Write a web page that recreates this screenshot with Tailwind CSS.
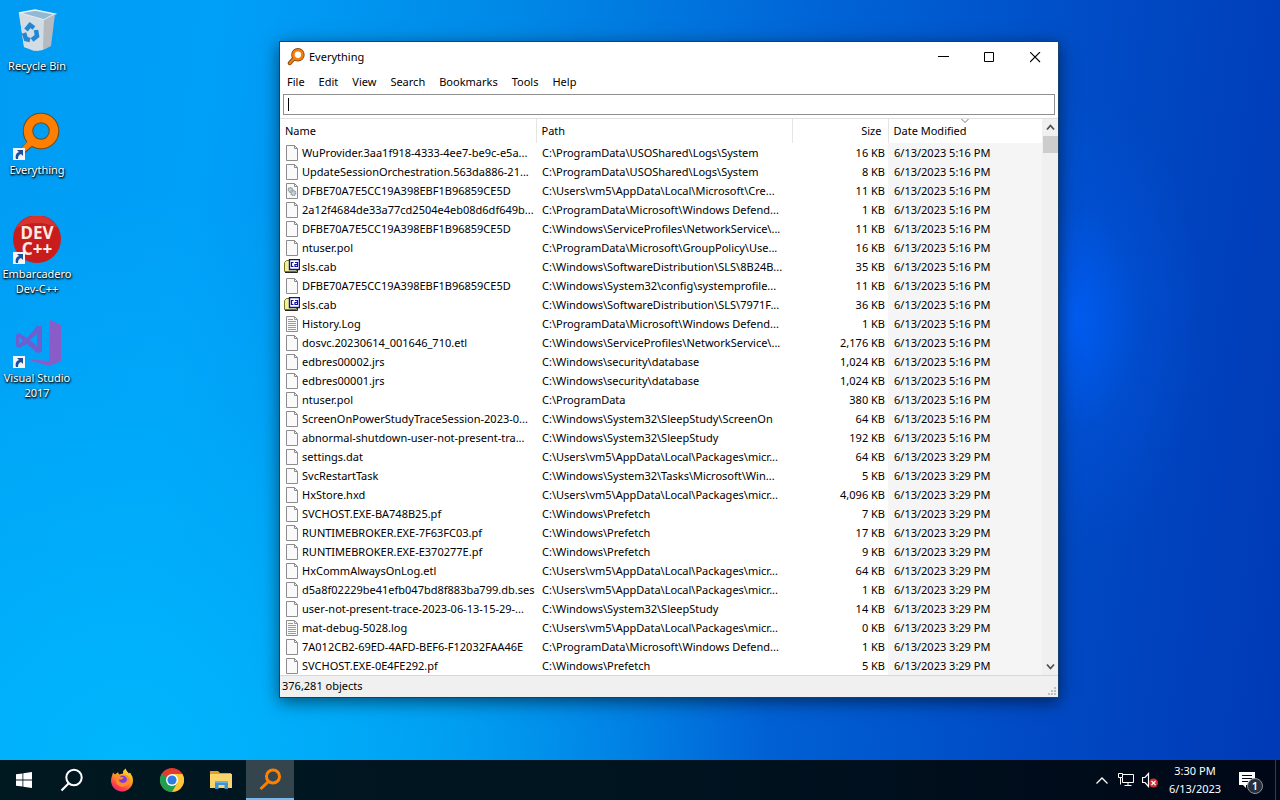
<!DOCTYPE html>
<html lang="en">
<head>
<meta charset="utf-8">
<meta name="viewport" content="width=device-width, initial-scale=1">
<title>Everything</title>
<script src="https://cdn.jsdelivr.net/npm/@tailwindcss/browser@4"></script>
</head>
<body class="flex h-screen flex-col overflow-hidden bg-[#0078e0] font-['Noto_Sans','Open_Sans',sans-serif] text-[11px] text-black">

<svg class="hidden" aria-hidden="true">
  <defs>
    <symbol id="file" viewBox="0 0 16 16"><path d="M2.500.5h8l3 3v12h-11z" fill="#fafafa" stroke="#8c8c8c"/><path d="M10.500.5v3h3" fill="none" stroke="#8c8c8c"/></symbol>
    <symbol id="log" viewBox="0 0 16 16"><path d="M2.500.5h8l3 3v12h-11z" fill="#fafafa" stroke="#8c8c8c"/><path d="M10.500.5v3h3M4 3.500h5M4 5.500h8M4 7.500h8M4 9.500h8M4 11.500h8M4 13.500h8" fill="none" stroke="#9a9a9a"/></symbol>
    <symbol id="gear" viewBox="0 0 16 16"><path d="M2.500.5h8l3 3v12h-11z" fill="#fafafa" stroke="#8c8c8c"/><path d="M10.500.5v3h3" fill="none" stroke="#8c8c8c"/><circle cx="6.500" cy="6.800" r="2.200" fill="#c9d0d4" stroke="#8d979d" stroke-width="1.400" stroke-dasharray="1.200 .5"/><circle cx="9.300" cy="10" r="2.400" fill="#c9d0d4" stroke="#8d979d" stroke-width="1.400" stroke-dasharray="1.200 .5"/></symbol>
    <symbol id="cab" viewBox="0 0 16 16"><path d="M.5 12.500v-9l2-2h4v2h6v9z" fill="#f0f0a0" stroke="#77771a"/><path d="M1 13.500h12.500V11" fill="none" stroke="#222"/><path d="M5.500.5h10v10h-10z" fill="#fff" stroke="#1010a0" stroke-width="1.400"/><path d="M9.500 3.500H7.500v4h2M11 3.500h2.500v4H11v-2h2" fill="none" stroke="#1010a0" stroke-width="1.200"/></symbol>
    <symbol id="lens" viewBox="0 0 48 48"><path d="M18 27 5 40l3 4 14-13" fill="#ff8000" stroke="#6b4a20" stroke-width="1.500"/><circle cx="28" cy="19" r="13" fill="none" stroke="#6b4a20" stroke-width="10.500"/><circle cx="28" cy="19" r="13" fill="none" stroke="#ff8000" stroke-width="8.500"/><path d="m17 27-12 13 3 3 14-12z" fill="#ff8000"/></symbol>
    <symbol id="lens-small" viewBox="0 0 16 16"><path d="M6 9.500 2.500 13.500" stroke="#8a4708" stroke-width="3.600" stroke-linecap="round"/><circle cx="9.700" cy="6" r="4" fill="none" stroke="#8a4708" stroke-width="4"/><circle cx="9.700" cy="6" r="4" fill="#fff" stroke="#f58010" stroke-width="2.400"/><path d="M6.500 9 2.500 13.500" stroke="#f58010" stroke-width="2" stroke-linecap="round"/></symbol>
    <symbol id="arrow" viewBox="0 0 12 12"><path d="M0 0h12v12H0z" fill="#f4f4f4"/><path d="M4 2h6v6L8 6c-2 1-3 2-3 5H3C2 8 3 5 6 4z" fill="#1e4f9c"/></symbol>
  </defs>
</svg>

<main class="relative min-h-0 flex-1 overflow-hidden bg-[linear-gradient(97deg,#009cf4_0%,#00a0f8_16%,#0088e6_38%,#0064d6_60%,#004cc6_80%,#0040bc_92%,#003ab6_100%)]">
  <div class="absolute inset-0 bg-[radial-gradient(ellipse_50%_75%_at_10%_100%,#00b6fc_0%,#00b2fca0_45%,transparent_100%)]"></div>
  <div class="absolute inset-0 bg-[radial-gradient(ellipse_10%_30%_at_84%_42%,#005cf0_0%,#0056e060_50%,transparent_100%)]"></div>

  <nav aria-label="Desktop" class="relative flex w-[74px] flex-col text-center leading-[15px] text-white [text-shadow:1px_1px_2px_#000,0_1px_2px_#000]">
    <a href="#" class="flex h-[104px] flex-col items-center gap-[2px] pt-2">
      <svg class="h-12 w-12 shrink-0" viewBox="0 0 48 48"><path d="m6 5 5 34 10 4 13-3 5-30-17-8z" fill="#c5d3df"/><path d="m6 5 16-3 20 4-11 6z" fill="#8fb9d4" stroke="#e9f1f6" stroke-width="1.500"/><path d="m6 5 25 7-1 30-6 1-13-4z" fill="#d3dce3"/><path d="m31 12 11-6-4 32-8 4z" fill="#b4bac0"/><g fill="none" stroke="#2386d4" stroke-width="4.500"><path d="m13 22 4-5 4 3M11 25l2 6 4 1M23 22l1 6-5 4"/></g></svg>
      <span>Recycle Bin</span>
    </a>
    <a href="#" class="flex h-[104px] flex-col items-center gap-[2px] pt-2">
      <span class="relative block h-12 w-12 shrink-0"><svg class="h-12 w-12"><use href="#lens"/></svg><svg class="absolute bottom-0 left-0 h-3 w-3"><use href="#arrow"/></svg></span>
      <span>Everything</span>
    </a>
    <a href="#" class="flex h-[104px] flex-col items-center gap-[2px] pt-2">
      <span class="relative block h-12 w-12 shrink-0"><svg class="h-12 w-12" viewBox="0 0 48 48"><circle cx="24" cy="23" r="24" fill="#c91c1c"/><path d="M3 12a24 24 0 0 1 42 0Q24 2 3 12" fill="#d8342e"/></svg>
        <span class="absolute inset-x-0 top-[9px] flex flex-col text-[17px] leading-4 font-bold text-[#ffeae2] [text-shadow:none]"><span>DEV</span><span>C++</span></span>
        <svg class="absolute bottom-0 left-0 h-3 w-3"><use href="#arrow"/></svg></span>
      <span>Embarcadero Dev-C++</span>
    </a>
    <a href="#" class="flex h-[104px] flex-col items-center gap-[2px] pt-2">
      <span class="relative block h-12 w-12 shrink-0"><svg class="h-12 w-12" viewBox="0 0 48 48"><path d="m37 0 11 5v36l-12 5L13 39l23 2z" fill="#8a5cc8"/><path d="M29 6v26l-5 1-10-9-8 4-3-2V15l3-2 8 5L24 6zM24 14l-7 6 7 6zM6 17v7l4-3z" fill="#6c5fd0" fill-rule="evenodd"/></svg><svg class="absolute bottom-0 left-0 h-3 w-3"><use href="#arrow"/></svg></span>
      <span>Visual Studio 2017</span>
    </a>
  </nav>

  <section aria-label="Everything" class="absolute top-[41px] left-[279px] w-[780px] border border-[#16416e] bg-white shadow-[0_4px_16px_#0008]">
    <header class="flex h-[30px] items-center">
      <svg class="ml-[7px] h-[18px] w-[18px]"><use href="#lens-small"/></svg>
      <h1 class="ml-1 flex-1">Everything</h1>
      <button aria-label="Minimize" class="flex h-full w-[46px] items-center justify-center"><svg class="h-[11px] w-[11px]" viewBox="0 0 11 11"><path d="M0 4.500h11" stroke="#000"/></svg></button>
      <button aria-label="Maximize" class="flex h-full w-[46px] items-center justify-center"><svg class="h-[11px] w-[11px]" viewBox="0 0 11 11"><path d="M.5.5h9v9h-9z" fill="none" stroke="#000"/></svg></button>
      <button aria-label="Close" class="flex h-full w-[46px] items-center justify-center"><svg class="h-[11px] w-[11px]" viewBox="0 0 11 11"><path d="m0 0 10 10M10 0 0 10" stroke="#000" stroke-width="1.100"/></svg></button>
    </header>
    <div role="menubar" class="flex h-5 items-center gap-[14px] pl-[7px]">
      <button role="menuitem">File</button><button role="menuitem">Edit</button><button role="menuitem">View</button><button role="menuitem">Search</button><button role="menuitem">Bookmarks</button><button role="menuitem">Tools</button><button role="menuitem">Help</button>
    </div>
    <div class="relative border-b border-[#e0e0e0] px-[3px] pt-[2px] pb-[3px]">
      <input aria-label="Search" class="block h-[21px] w-full border border-[#8f8f8f] bg-white px-1 caret-transparent outline-none">
      <span class="absolute top-[6px] left-2 h-[13px] w-px bg-black"></span>
    </div>
    <div class="flex">
      <div class="min-w-0 flex-1">
      <table class="w-full table-fixed border-collapse">
        <colgroup><col class="w-[256px]"><col class="w-[256px]"><col class="w-[96px]"><col></colgroup>
        <thead>
          <tr class="h-6 text-left">
            <th class="border-r border-[#e5e5e5] p-0 pl-[5px] font-normal">Name</th>
            <th class="border-r border-[#e5e5e5] p-0 pl-[5px] font-normal">Path</th>
            <th class="border-r border-[#e5e5e5] p-0 pr-[6px] text-right font-normal">Size</th>
            <th aria-sort="descending" class="relative p-0 pl-[5px] font-normal">Date Modified<svg class="absolute top-0 left-1/2 h-1 w-2 -translate-x-1/2" viewBox="0 0 8 4"><path d="m.5 0 3.500 3.500L7.500 0" fill="none" stroke="#777"/></svg></th>
          </tr>
        </thead>
        <tbody id="rows"></tbody>
      </table>
      </div>
      <div class="flex w-4 flex-col items-center bg-[#f0f0f0]">
        <button aria-label="Scroll up" class="flex h-[17px] w-full items-center justify-center"><svg class="h-[7px] w-[9px]" viewBox="0 0 9 7"><path d="m1 5.500 3.500-4 3.500 4" fill="none" stroke="#505050" stroke-width="1.800"/></svg></button>
        <div class="h-[17px] w-[15px] bg-[#cdcdcd]"></div>
        <div class="flex-1"></div>
        <button aria-label="Scroll down" class="flex h-[17px] w-full items-center justify-center"><svg class="h-[7px] w-[9px]" viewBox="0 0 9 7"><path d="m1 1.500 3.500 4 3.500-4" fill="none" stroke="#505050" stroke-width="1.800"/></svg></button>
      </div>
    </div>
    <footer class="flex h-[22px] items-center justify-between border-t border-[#d7d7d7] bg-[#f0f0f0] pl-[2px]">
      <span>376,281 objects</span>
      <svg class="mr-[2px] mb-[2px] h-2 w-2 self-end fill-[#bfbfbf]" viewBox="0 0 8 8"><path d="M6 0h2v2H6zM3 3h2v2H3zM6 3h2v2H6zM0 6h2v2H0zM3 6h2v2H3zM6 6h2v2H6z"/></svg>
    </footer>
  </section>
</main>

<footer class="flex h-10 shrink-0 items-stretch bg-linear-to-r from-[#001820] via-[#001420] to-[#000818] text-white">
  <button aria-label="Start" class="flex w-12 items-center justify-center"><svg class="h-4 w-4" viewBox="0 0 16 16"><path d="M0 2.300 6.500 1.400v6.200H0zM7.300 1.300 16 0v7.600H7.300zM0 8.400h6.500v6.200L0 13.700zM7.300 8.400H16V16l-8.700-1.300z" fill="#fff"/></svg></button>
  <button aria-label="Search" class="flex w-12 items-center justify-center"><svg class="h-6 w-6" viewBox="0 0 24 24"><circle cx="14" cy="9.500" r="7.700" fill="none" stroke="#fff" stroke-width="2"/><path d="m9 15-7.500 7.500" stroke="#fff" stroke-width="2.200"/></svg></button>
  <button aria-label="Firefox" class="flex w-[52px] items-center justify-center"><svg class="h-6 w-6" viewBox="0 0 24 24"><defs><linearGradient id="ff" x1=".8" y1="0" x2=".3" y2="1"><stop offset="0" stop-color="#ffe52e"/><stop offset=".45" stop-color="#ff9a25"/><stop offset=".8" stop-color="#ff3d50"/><stop offset="1" stop-color="#e62a78"/></linearGradient></defs><path d="M3 4.500 5 6.500l3-2.300 1 2.300 4-1Q13 2 15.500.5q1 3 3.500 5l1-1q3 4 3 8A11 11 0 1 1 2 8z" fill="url(#ff)"/><circle cx="12.500" cy="12.500" r="5" fill="#7b3be0"/><path d="M5 7q4-1 6 2l3 .5-2 2H9q0 3 4 3.500 4-.5 4-4-1-3-3-4 5 0 6 5-2 7-8 7-7-1-7-12" fill="#ff8a26"/></svg></button>
  <button aria-label="Chrome" class="flex w-12 items-center justify-center"><svg class="h-6 w-6" viewBox="0 0 24 24"><circle cx="12" cy="12" r="12" fill="#e33b2e"/><path d="M1.600 6A12 12 0 0 0 12 24l5.200-9z" fill="#1fa050"/><path d="M12 24A12 12 0 0 0 22.400 6H12l5.200 9z" fill="#fcc934"/><circle cx="12" cy="12" r="6" fill="#fff"/><circle cx="12" cy="12" r="4.600" fill="#2f7de1"/></svg></button>
  <button aria-label="File Explorer" class="flex w-[50px] items-center justify-center"><svg class="h-5 w-[22px]" viewBox="0 0 22 20"><path d="M0 1h8l2 2h11v4H0z" fill="#e0a12c"/><path d="M0 4h22v14H0z" fill="#fbd56b"/><path d="M5 19v-8h13v8h-3.500v-4h-6v4z" fill="#3f93d0"/><path d="M5 11h13v2H5z" fill="#66b2e4"/></svg></button>
  <button aria-label="Everything" class="flex w-12 items-center justify-center border-b-2 border-[#76b9ed] bg-[#34454e]"><svg class="h-6 w-6" viewBox="0 0 24 24"><circle cx="15" cy="9.500" r="6.500" fill="none" stroke="#ff8000" stroke-width="3"/><path d="m10.500 14.500-8 7.500" stroke="#ff8000" stroke-width="3"/></svg></button>
  <div class="flex-1"></div>
  <button aria-label="Show hidden icons" class="flex w-6 items-center justify-center"><svg class="h-[7px] w-3" viewBox="0 0 12 7"><path d="m.5 6.500 5.500-5.500 5.500 5.500" fill="none" stroke="#fff" stroke-width="1.300"/></svg></button>
  <button aria-label="Network" class="flex w-6 items-center justify-center"><svg class="h-4 w-4" viewBox="0 0 16 16"><path d="M5 2.500h10.500v8H4.500V6M10 10.500v3M6.500 13.500h7M.5 1.500h4v4h-4zM2.500 5.500v7" fill="none" stroke="#fff"/></svg></button>
  <button aria-label="Volume muted" class="flex w-6 items-center justify-center"><svg class="h-4 w-4" viewBox="0 0 16 16"><path d="M.5 5.500H3l3.500-4v13L3 10.500H.5z" fill="none" stroke="#fff" stroke-width="1.200"/><circle cx="11.500" cy="11" r="4.500" fill="#d03030"/><path d="m9.500 9 4 4M13.500 9l-4 4" stroke="#fff" stroke-width="1.200"/></svg></button>
  <button class="flex w-[66px] flex-col items-center justify-center leading-[18px]"><span>3:30 PM</span><span>6/13/2023</span></button>
  <button aria-label="Notifications" class="mr-1 flex w-12 items-center justify-center border-r border-[#556070]/60 pr-1"><svg class="h-7 w-7" viewBox="0 0 28 28"><path d="M3 6h16v13h-9v3l-3-3H3z" fill="#fff"/><path d="M6 9.500h10M6 12.500h10M6 15.500h6" stroke="#000818"/><circle cx="19" cy="20" r="7.500" fill="#272f3a" stroke="#8c939b"/><text x="19" y="24" text-anchor="middle" font-size="11" font-weight="600" fill="#fff">1</text></svg></button>
</footer>

<script>
const N = 'C:\\Windows\\', P = 'C:\\ProgramData\\', U = 'C:\\Users\\vm5\\AppData\\Local\\', A = '5:16 PM', B = '3:29 PM';
const data = [
  ['file','WuProvider.3aa1f918-4333-4ee7-be9c-e5a...',P+'USOShared\\Logs\\System','16',A],
  ['file','UpdateSessionOrchestration.563da886-21...',P+'USOShared\\Logs\\System','8',A],
  ['gear','DFBE70A7E5CC19A398EBF1B96859CE5D',U+'Microsoft\\Cre...','11',A],
  ['file','2a12f4684de33a77cd2504e4eb08d6df649b...',P+'Microsoft\\Windows Defend...','1',A],
  ['file','DFBE70A7E5CC19A398EBF1B96859CE5D',N+'ServiceProfiles\\NetworkService\\...','11',A],
  ['file','ntuser.pol',P+'Microsoft\\GroupPolicy\\Use...','16',A],
  ['cab','sls.cab',N+'SoftwareDistribution\\SLS\\8B24B...','35',A],
  ['file','DFBE70A7E5CC19A398EBF1B96859CE5D',N+'System32\\config\\systemprofile...','11',A],
  ['cab','sls.cab',N+'SoftwareDistribution\\SLS\\7971F...','36',A],
  ['log','History.Log',P+'Microsoft\\Windows Defend...','1',A],
  ['file','dosvc.20230614_001646_710.etl',N+'ServiceProfiles\\NetworkService\\...','2,176',A],
  ['file','edbres00002.jrs',N+'security\\database','1,024',A],
  ['file','edbres00001.jrs',N+'security\\database','1,024',A],
  ['file','ntuser.pol','C:\\ProgramData','380',A],
  ['file','ScreenOnPowerStudyTraceSession-2023-0...',N+'System32\\SleepStudy\\ScreenOn','64',A],
  ['file','abnormal-shutdown-user-not-present-tra...',N+'System32\\SleepStudy','192',A],
  ['file','settings.dat',U+'Packages\\micr...','64',B],
  ['file','SvcRestartTask',N+'System32\\Tasks\\Microsoft\\Win...','5',B],
  ['file','HxStore.hxd',U+'Packages\\micr...','4,096',B],
  ['file','SVCHOST.EXE-BA748B25.pf',N+'Prefetch','7',B],
  ['file','RUNTIMEBROKER.EXE-7F63FC03.pf',N+'Prefetch','17',B],
  ['file','RUNTIMEBROKER.EXE-E370277E.pf',N+'Prefetch','9',B],
  ['file','HxCommAlwaysOnLog.etl',U+'Packages\\micr...','64',B],
  ['file','d5a8f02229be41efb047bd8f883ba799.db.ses',U+'Packages\\micr...','1',B],
  ['file','user-not-present-trace-2023-06-13-15-29-...',N+'System32\\SleepStudy','14',B],
  ['log','mat-debug-5028.log',U+'Packages\\micr...','0',B],
  ['file','7A012CB2-69ED-4AFD-BEF6-F12032FAA46E',P+'Microsoft\\Windows Defend...','1',B],
  ['file','SVCHOST.EXE-0E4FE292.pf',N+'Prefetch','5',B]
];
document.getElementById('rows').innerHTML = data.map(([icon, name, path, size, time]) => `
  <tr class="h-[19px] whitespace-nowrap">
    <td class="p-0 pl-1"><div class="flex h-[19px] items-start gap-[2px] pt-px leading-[18px]"><svg class="mt-px h-4 w-4 shrink-0"><use href="#${icon}"/></svg><span>${name}</span></div></td>
    <td class="p-0 pt-px pl-[6px] leading-[18px]">${path}</td>
    <td class="p-0 pt-px pr-[3px] text-right leading-[18px]">${size} KB</td>
    <td class="bg-[#f5f5f5] p-0 pt-px pl-[6px] leading-[18px]">6/13/2023 ${time}</td>
  </tr>`).join('');
</script>
</body>
</html>
